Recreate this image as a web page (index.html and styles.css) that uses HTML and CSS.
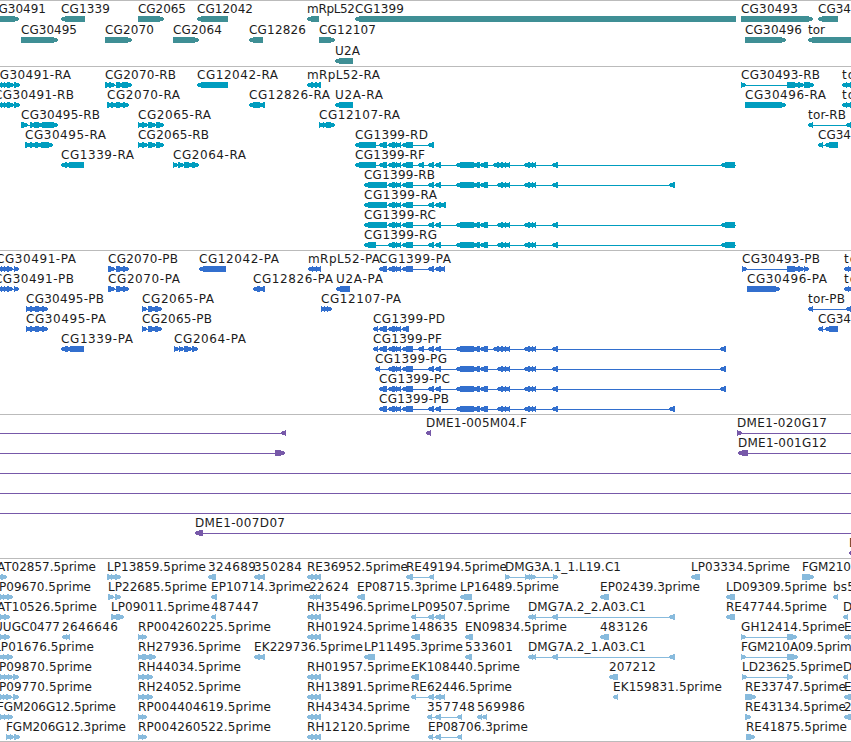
FILE: index.html
```html
<!DOCTYPE html>
<html lang="en">
<head>
<meta charset="utf-8">
<title>Genome browser</title>
<link rel="stylesheet" href="styles.css">
</head>
<body>
<main class="browser" id="browser"></main>
<script src="tracks.js"></script>
</body>
</html>
```
FILE: styles.css
```css
body {
  margin: 0;
  background: #fff;
  overflow: hidden;
}

.browser {
  display: flex;
  flex-direction: column;
  width: 851px;
  height: 741px;
  border-bottom: 1px solid #bbb;
}

.track {
  box-sizing: border-box;
  flex: none;
  display: flex;
  flex-direction: column;
  border-top: 1px solid #bbb;
}

.row {
  display: block;
  flex: none;
  width: 851px;
  height: 20px;
  overflow: visible;
}

.genes { height: 66px; color: #3f8f95; }
.genes .row { height: 21px; }
.transcripts { height: 184px; color: #009dbf; }
.proteins { height: 164px; color: #326fce; }
.clones { height: 144px; color: #7759a9; }
.ests { height: 183px; color: #88bbdd; }

.label {
  font-family: "DejaVu Sans", sans-serif;
  font-size: 12px;
  fill: #1c1c1c;
}

.shape {
  fill: currentColor;
  shape-rendering: crispEdges;
}
```
FILE: tracks.js
```js
// Each row is a list of features separated by ";".
// Feature: label , label start , label end , strand , blocks [, line extent]
const MID = "388-395 393-397 396-401 402-413";
const FAR = "456-474 473-480 480-488";
const TAIL = "524-530 529-533 532-536 552-558";
const LONG = `${MID} 428-434 435-441 ${FAR} 497-503 501-506 505-510 ${TAIL}`;
const LONGF = `${MID} 418-424 428-434 435-441 ${FAR} 493-499 497-503 501-506 505-510 ${TAIL}`;
const TRIO = "307-313 311-317 315-321";
const EDGE = "-4-3 1-6 4-9 7-14 14-20";

const tracks = [
  ["genes", [
    "CG30491,-10,46,R,-9-19;CG1339,61,110,L,61-85;CG2065,138,186,R,138-164;CG12042,197,253,L,197-228;mRpL52,307,355,L,307-319;CG1399,355,404,L,355-736;CG30493,741,798,R,741-813;CG34,818,851,L,818-838",
    "CG30495,21,77,R,21-58;CG2070,105,154,R,105-132;CG2064,173,222,R,173-199;CG12826,249,306,L,249-263;CG12107,319,376,R,319-335;CG30496,745,802,R,745-786;tor,808,825,L,808-870",
    "U2A,335,360,L,335-353"
  ]],
  ["transcripts", [
    `CG30491-RA,-9,71,R,${EDGE};CG2070-RB,105,176,R,105-111 109-115 116-124 122-132;CG12042-RA,197,278,L,197-228;mRpL52-RA,307,380,L,${TRIO};CG30493-RB,741,820,R,741-746 787-799 798-804 804-814;to,842,855,L,842-847 846-856`,
    `CG30491-RB,-6,74,R,${EDGE};CG2070-RA,107,180,R,107-113 111-117 116-124 123-129;CG12826-RA,249,330,L,249-260 259-265;U2A-RA,335,383,L,335-353;CG30496-RA,745,826,R,745-786;to,842,855,L,842-847 846-856`,
    "CG30495-RB,21,100,R,21-28 30-36 34-43 42-58;CG2065-RA,138,211,R,138-143 142-148 148-156 156-164;CG12107-RA,319,400,R,319-324 323-328 326-335;tor-RB,808,846,L,808-813 846-856",
    `CG30495-RA,25,106,R,25-31 30-36 35-42 41-53;CG2065-RB,138,209,R,138-143 142-148 148-156 156-164;CG1399-RD,355,428,L,355-376 379-387 ${MID} 428-434;CG34,818,851,L,818-823 825-838`,
    `CG1339-RA,61,134,L,61-67 65-84;CG2064-RA,173,246,R,173-178 178-184 184-193 192-199;CG1399-RF,355,425,L,355-376 379-387 ${LONGF} 721-735,355-736`,
    `CG1399-RB,364,435,L,364-387 ${LONG} 669-675`,
    `CG1399-RA,364,437,L,364-387 ${MID} 428-434 435-441 440-446`,
    `CG1399-RC,364,436,L,364-387 ${LONG} 721-735,364-736`,
    `CG1399-RG,364,437,L,364-376 ${LONG} 721-735,364-736`
  ]],
  ["proteins", [
    `CG30491-PA,-4,76,R,-4-3 1-6 4-9 7-13 14-19;CG2070-PB,108,178,R,108-115 116-124 123-129;CG12042-PA,199,279,L,199-226;mRpL52-PA,308,380,L,308-313 312-317 316-321;CG1399-PA,379,451,L,379-387 ${MID} 428-434 435-441 440-445;CG30493-PB,742,820,R,742-747 787-799 798-804 804-809;to,844,857,L,844-849 848-858`,
    "CG30491-PB,-6,74,R,-4-3 1-6 4-9 7-13 14-19;CG2070-PA,108,180,R,108-115 116-124 123-129;CG12826-PA,253,333,L,253-260 259-265;U2A-PA,336,383,L,336-350;CG30496-PA,747,827,R,747-780;to,844,857,L,844-849 848-858",
    "CG30495-PB,26,104,R,26-31 30-36 35-43 42-48;CG2065-PA,142,214,R,142-147 148-156 155-162;CG12107-PA,321,401,R,321-325 324-328 327-332;tor-PB,808,845,L,808-813 846-856",
    `CG30495-PA,26,106,R,26-31 30-36 35-43 42-48;CG2065-PB,142,212,R,142-147 148-156 155-162;CG1399-PD,373,445,L,373-378 379-387 388-395 393-397 396-401 402-409;CG34,818,851,L,818-823 825-838`,
    `CG1339-PA,61,133,L,61-68 66-84;CG2064-PA,174,246,R,174-179 179-184 184-192 192-198;CG1399-PF,373,442,L,373-378 379-387 ${LONGF} 720-726`,
    `CG1399-PG,375,447,L,375-380 ${LONG} 720-726`,
    `CG1399-PC,379,450,L,379-387 ${LONG} 720-726`,
    `CG1399-PB,379,449,L,379-387 ${LONG} 669-675`
  ]],
  ["clones", [
    ",0,0,L,281-286,-9-286;DME1-005M04.F,426,527,L,426-431;DME1-020G17,737,827,R,737-742,737-860",
    ",0,0,R,275-285,-9-285;DME1-001G12,738,827,L,738-748,738-860",
    ",0,0,R,,-9-860",
    ",0,0,R,,-9-860",
    ",0,0,R,,-9-860",
    "DME1-007D07,195,285,L,195-203,195-860",
    "D,849,858,L,849-859"
  ]],
  ["ests", [
    `AT02857.5prime,-3,96,R,-3-2 1-7;LP13859.5prime,107,206,R,107-113 111-116 115-121;324689,208,256,L,208-216;350284,254,302,L,254-260 259-265;RE36952.5prime,307,408,L,${TRIO};RE49194.5prime,406,507,L,406-413 429-434;DMG3A.1_1.L19.C1,505,621,R,505-510 525-530 529-532 531-536 553-558;LP03334.5prime,691,790,L,691-700;FGM210,802,851,R,802-814`,
    "P09670.5prime,-1,91,R,0-5 3-8 7-13;LP22685.5prime,108,207,R,108-114 115-121;EP10714.3prime,211,311,L,211-217;22624,309,349,L,309-314 312-317 316-321;EP08715.3prime,357,457,L,357-365;LP16489.5prime,460,559,L,460-472;EP02439.3prime,600,700,L,600-609;LD09309.5prime,726,827,L,726-735;bs5,833,855,L,833-838",
    `AT10526.5prime,-3,97,R,-1-5 4-10;LP09011.5prime,111,210,R,111-117 116-124;487447,211,259,L,211-216;RH35496.5prime,307,410,L,${TRIO};LP09507.5prime,411,510,L,411-416 428-434 435-441 440-445;DMG7A.2_2.A03.C1,528,646,L,528-533 532-536 552-558 669-675;RE47744.5prime,726,827,L,726-735;D,843,852,L,843-848`,
    `UUGC0477,-6,60,R,-1-5 4-10;2646646,62,118,L,62-67 65-70;RP004260225.5prime,138,271,R,138-143 142-147;RH01924.5prime,307,410,L,${TRIO};148635,411,458,L,411-420;EN09834.5prime,465,567,L,465-473;483126,600,648,L,600-609;GH12414.5prime,741,845,R,741-746 787-797;E,844,852,L,844-849 848-858`,
    "LP01676.5prime,-6,94,R,-1-4 3-8 7-13;RH27936.5prime,138,241,R,138-143 142-150 149-156;EK229736.5prime,254,363,L,254-260 259-265;LP11495.3prime,364,463,L,364-375;533601,465,513,L,465-472;DMG7A.2_1.A03.C1,528,646,L,528-533 532-536 552-558 669-675;FGM210A09.5prime,741,859,R,741-746 787-798",
    `P09870.5prime,-1,92,R,0-5 4-9 8-13 13-19;RH44034.5prime,138,241,R,138-143 142-148 147-153;RH01957.5prime,307,410,L,${TRIO};EK108440.5prime,411,520,L,411-419;207212,609,656,L,609-618;LD23625.5prime,742,843,R,742-747 787-793;D,843,852,L,843-848`,
    `P09770.5prime,-1,92,R,0-5 3-8 6-12 13-19;RH24052.5prime,138,241,R,138-143 142-148 147-153;RH13891.5prime,307,410,L,${TRIO};RE62446.5prime,411,512,L,411-416 428-434 435-441 440-445;EK159831.5prime,613,722,L,613-618;RE33747.5prime,745,846,R,745-756;E,844,852,L,844-854`,
    `FGM206G12.5prime,-3,116,R,0-5 4-9 8-13;RP004404619.5prime,138,271,R,138-143 142-147;RH43434.5prime,307,410,L,${TRIO};357748,427,475,L,427-432 435-441 457-462;569986,477,525,L,477-482 482-487;RE43134.5prime,745,846,R,745-751;2,844,852,L,844-854`,
    `FGM206G12.3prime,6,126,R,6-11 10-14 14-20;RP004260522.5prime,138,271,R,138-143 142-147;RH12120.5prime,307,410,L,${TRIO};EP08706.3prime,428,528,L,428-433 435-441 457-462;RE41875.5prime,746,847,R,746-755`
  ]]
];

const NS = "http://www.w3.org/2000/svg";
const TIP = 5;

function el(name, attrs, parent) {
  const node = document.createElementNS(NS, name);
  for (const key in attrs) node.setAttribute(key, attrs[key]);
  parent.appendChild(node);
  return node;
}

function span(text) {
  const m = text.match(/^(-?\d+)-(\d+)$/);
  return [Number(m[1]), Number(m[2])];
}

// Arrow-ended box, 6px tall, pointing along the strand.
function arrow([a, b], strand) {
  const tip = Math.min(TIP, b - a);
  return strand === "R"
    ? `M${a} 15H${b - tip}L${b} 17V19L${b - tip} 21H${a}Z`
    : `M${b} 15H${a + tip}L${a} 17V19L${a + tip} 21H${b}Z`;
}

const root = document.getElementById("browser");
for (const [name, rows] of tracks) {
  const section = document.createElement("section");
  section.className = "track " + name;
  root.appendChild(section);
  for (const row of rows) {
    const svg = el("svg", { class: "row" }, section);
    for (const feature of row.split(";")) {
      const [label, x, end, strand, blockText, extent] = feature.split(",");
      const blocks = blockText ? blockText.split(" ").map(span) : [];
      const [from, to] = extent ? span(extent) : [blocks[0][0], blocks[blocks.length - 1][1]];
      if (blocks.length !== 1 || extent) {
        el("rect", { class: "shape", x: from, y: 18, width: to - from, height: 1 }, svg);
      }
      for (const block of blocks) {
        el("path", { class: "shape", d: arrow(block, strand) }, svg);
      }
      if (label) {
        const text = el("text", { class: "label", x, y: 12 }, svg);
        if (label.length > 1) text.setAttribute("textLength", end - x);
        text.textContent = label;
      }
    }
  }
}
```
